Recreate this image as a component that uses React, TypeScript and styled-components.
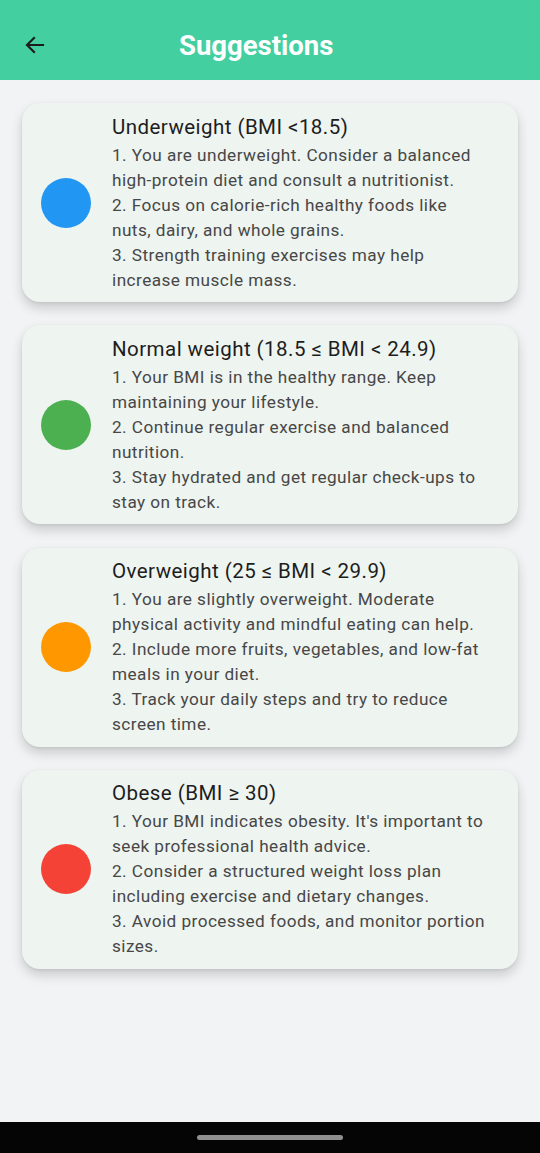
import React from "react";
import styled, { createGlobalStyle } from "styled-components";

const Global = createGlobalStyle`
  html, body { margin: 0; padding: 0; }
  body { background: #f2f3f5; font-family: Roboto, "Noto Sans", sans-serif; }
`;

const Screen = styled.div`
  width: 540px;
  height: 1153px;
  display: flex;
  flex-direction: column;
  background: #f2f3f5;
`;

const AppBar = styled.header`
  height: 80px;
  flex-shrink: 0;
  background: #43cfa0;
  display: flex;
  align-items: center;
  padding: 10px 0 0 22px;
  box-sizing: border-box;
`;

const BackButton = styled.button`
  width: 26px;
  height: 26px;
  padding: 0;
  border: none;
  background: none;
  display: flex;
  align-items: center;
  justify-content: center;
  color: #1c1c1c;
`;

const Title = styled.h1`
  margin: 0 0 0 131px;
  font-family: Roboto, sans-serif;
  font-weight: 700;
  font-size: 27.5px;
  color: #ffffff;
  letter-spacing: 0;
`;

const List = styled.main`
  flex: 1;
  display: flex;
  flex-direction: column;
  gap: 23.3px;
  padding: 23px 22px 0 22px;
`;

const Card = styled.section`
  background: #eef4f0;
  border-radius: 18px;
  height: 199px;
  box-sizing: border-box;
  display: flex;
  align-items: center;
  padding: 0 10px 0 19px;
  box-shadow: 0 6px 12px rgba(0, 0, 0, 0.17), 0 1px 3px rgba(0, 0, 0, 0.07);
`;

const Dot = styled.div<{ $color: string }>`
  width: 50px;
  height: 50px;
  border-radius: 50%;
  background: ${(p) => p.$color};
  flex-shrink: 0;
  margin-right: 21px;
`;

const Texts = styled.div`
  display: flex;
  flex-direction: column;
`;

const CardTitle = styled.h2`
  margin: 0;
  font-family: Roboto, sans-serif;
  font-weight: 400;
  font-size: 20.5px;
  line-height: 28px;
  letter-spacing: 0.45px;
  color: #1d1d1d;
`;

const Body = styled.p`
  margin: 2px 0 0 0;
  font-family: Roboto, sans-serif;
  font-size: 17.2px;
  line-height: 25px;
  letter-spacing: 0.45px;
  color: #474747;
  white-space: pre-line;
`;

const NavBar = styled.footer`
  height: 31px;
  flex-shrink: 0;
  background: #050505;
  display: flex;
  align-items: center;
  justify-content: center;
`;

const Handle = styled.div`
  width: 146px;
  height: 5px;
  border-radius: 3px;
  background: #8f8f8f;
`;

const items = [
  {
    color: "#2196f3",
    title: "Underweight (BMI <18.5)",
    body:
      "1. You are underweight. Consider a balanced\nhigh-protein diet and consult a nutritionist.\n2. Focus on calorie-rich healthy foods like\nnuts, dairy, and whole grains.\n3. Strength training exercises may help\nincrease muscle mass.",
  },
  {
    color: "#4caf50",
    title: "Normal weight (18.5 ≤ BMI < 24.9)",
    body:
      "1. Your BMI is in the healthy range. Keep\nmaintaining your lifestyle.\n2. Continue regular exercise and balanced\nnutrition.\n3. Stay hydrated and get regular check-ups to\nstay on track.",
  },
  {
    color: "#ff9800",
    title: "Overweight (25 ≤ BMI < 29.9)",
    body:
      "1. You are slightly overweight. Moderate\nphysical activity and mindful eating can help.\n2. Include more fruits, vegetables, and low-fat\nmeals in your diet.\n3. Track your daily steps and try to reduce\nscreen time.",
  },
  {
    color: "#f44336",
    title: "Obese (BMI ≥ 30)",
    body:
      "1. Your BMI indicates obesity. It's important to\nseek professional health advice.\n2. Consider a structured weight loss plan\nincluding exercise and dietary changes.\n3. Avoid processed foods, and monitor portion\nsizes.",
  },
];

export default function App() {
  return (
    <>
      <Global />
      <Screen>
        <AppBar>
          <BackButton aria-label="Back">
            <svg width="24" height="24" viewBox="0 0 24 24" fill="none">
              <path
                d="M20 12H4.5M11 5l-7 7 7 7"
                stroke="currentColor"
                strokeWidth="2.2"
                strokeLinecap="square"
              />
            </svg>
          </BackButton>
          <Title>Suggestions</Title>
        </AppBar>
        <List>
          {items.map((it) => (
            <Card key={it.title}>
              <Dot $color={it.color} />
              <Texts>
                <CardTitle>{it.title}</CardTitle>
                <Body>{it.body}</Body>
              </Texts>
            </Card>
          ))}
        </List>
        <NavBar>
          <Handle />
        </NavBar>
      </Screen>
    </>
  );
}
